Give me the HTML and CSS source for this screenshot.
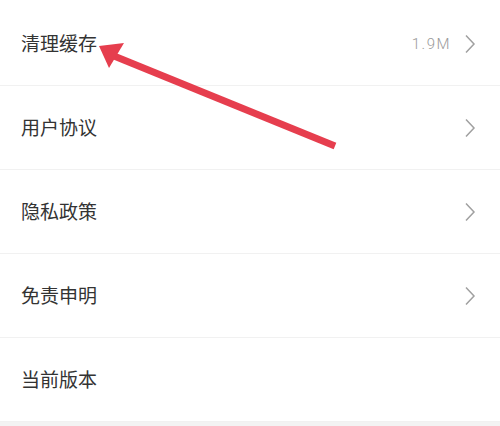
FILE: index.html
```html
<!DOCTYPE html>
<html lang="zh">
<head>
<meta charset="utf-8">
<link rel="stylesheet" href="styles.css">
</head>
<body>
<div class="page">
  <ul class="list">
    <li class="row"><span class="label">清理缓存</span><span class="right"><span class="value">1.9M</span><svg class="chev" viewBox="0 0 12 20" width="12" height="20"><path d="M2 1.5 L10 10 L2 18.5" fill="none" stroke="#a0a0a0" stroke-width="1.5"/></svg></span></li>
    <li class="row"><span class="label">用户协议</span><span class="right"><svg class="chev" viewBox="0 0 12 20" width="12" height="20"><path d="M2 1.5 L10 10 L2 18.5" fill="none" stroke="#a0a0a0" stroke-width="1.5"/></svg></span></li>
    <li class="row"><span class="label">隐私政策</span><span class="right"><svg class="chev" viewBox="0 0 12 20" width="12" height="20"><path d="M2 1.5 L10 10 L2 18.5" fill="none" stroke="#a0a0a0" stroke-width="1.5"/></svg></span></li>
    <li class="row"><span class="label">免责申明</span><span class="right"><svg class="chev" viewBox="0 0 12 20" width="12" height="20"><path d="M2 1.5 L10 10 L2 18.5" fill="none" stroke="#a0a0a0" stroke-width="1.5"/></svg></span></li>
    <li class="row"><span class="label">当前版本</span></li>
  </ul>
  <svg class="arrow" viewBox="0 0 500 426" width="500" height="426">
    <line x1="114" y1="56" x2="335" y2="146" stroke="#e63e4e" stroke-width="7"/>
    <polygon points="99,46 124,43 109,68" fill="#e63e4e"/>
  </svg>
</div>
</body>
</html>
```

FILE: styles.css
```css
html, body {
  margin: 0;
  padding: 0;
  background: #f3f3f3;
}
.page {
  position: relative;
  width: 500px;
  height: 426px;
  overflow: hidden;
  font-family: "Noto Sans CJK SC", "Noto Sans", sans-serif;
}
.list {
  list-style: none;
  margin: 0;
  padding: 2px 0 0 0;
  background: #ffffff;
}
.row {
  display: flex;
  align-items: center;
  justify-content: space-between;
  height: 83px;
  padding: 0 24px 0 21px;
  border-bottom: 1px solid #f1f1f1;
}
.label {
  font-size: 19px;
  color: #333333;
  padding-bottom: 2px;
}
.right {
  display: flex;
  align-items: center;
  gap: 13px;
}
.value {
  font-family: "Roboto", "Noto Sans", sans-serif;
  font-weight: 300;
  font-size: 15px;
  color: #9a9a9a;
  letter-spacing: 1.5px;
}
.chev {
  display: block;
}
.arrow {
  position: absolute;
  left: 0;
  top: 0;
}
```
